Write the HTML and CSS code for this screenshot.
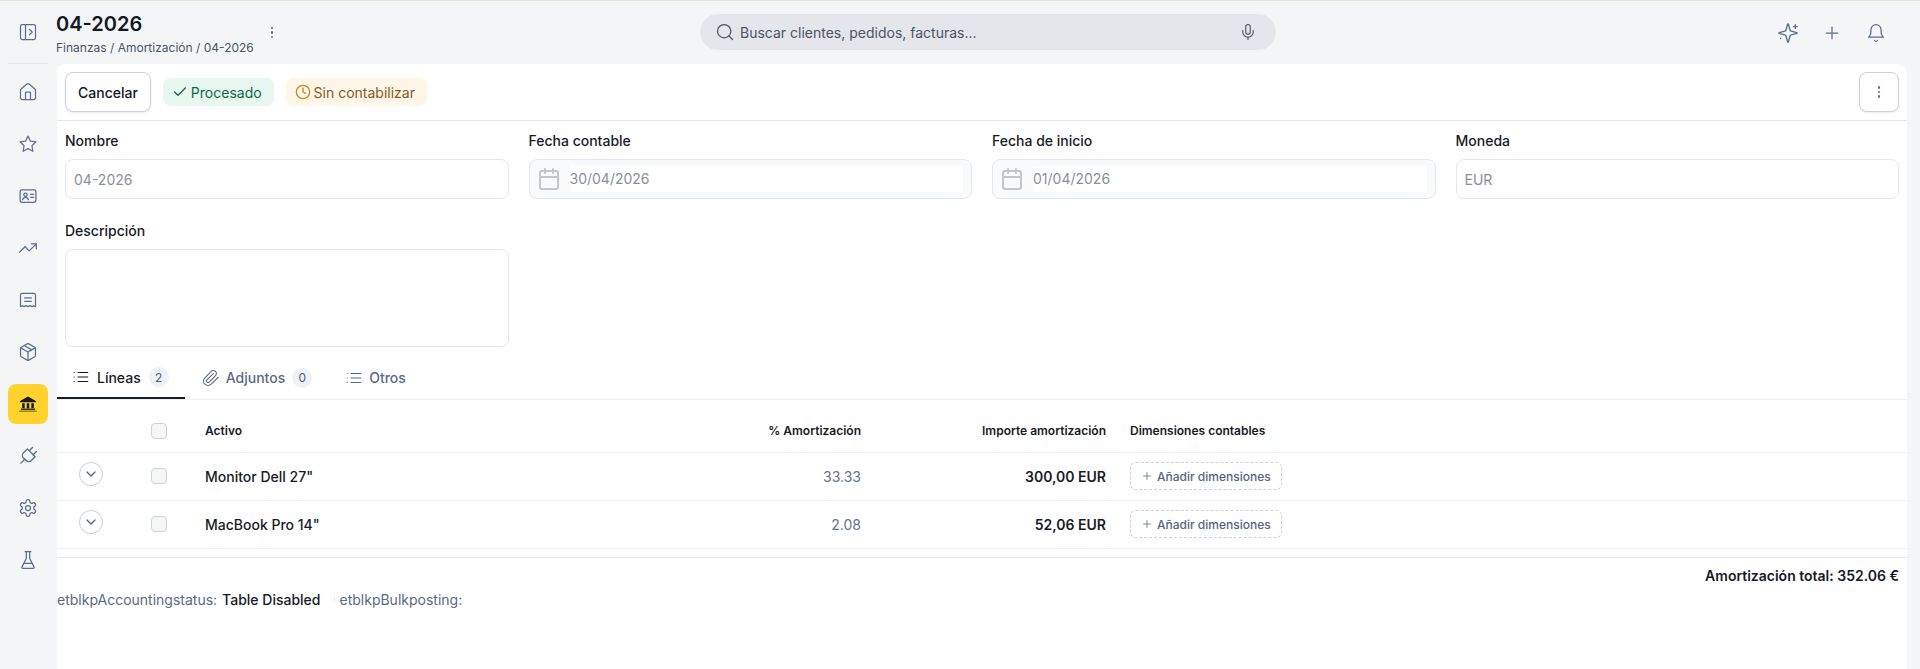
FILE: index.html
```html
<!DOCTYPE html>
<html lang="es">
<head>
    <meta charset="UTF-8">
    <title>04-2026 - Amortización</title>
    <meta name="viewport" content="width=device-width,initial-scale=1">
    <link rel="stylesheet" href="styles.css">
</head>
<body>
    <header class="topbar">
        <div class="rail-top">
            <button class="rail-btn">
                <svg class="icon" viewBox="0 0 24 24"><rect x="3" y="3" width="18" height="18" rx="2"/><path d="M9 3v18"/><path d="m14 9 3 3-3 3"/></svg>
            </button>
        </div>
        <div class="topbar-main">
            <div class="page-head">
                <div class="page-titles">
                    <h1>04-2026</h1>
                    <div class="breadcrumb">Finanzas / Amortización / 04-2026</div>
                </div>
                <div class="head-dots"><i></i><i></i><i></i></div>
            </div>
            <div class="global-search">
                <svg class="icon search-icon" viewBox="0 0 24 24"><circle cx="11" cy="11" r="8"/><path d="m21 21-4.3-4.3"/></svg>
                <span class="search-text">Buscar clientes, pedidos, facturas...</span>
                <svg class="icon mic-icon" viewBox="0 0 24 24"><path d="M12 2a3 3 0 0 0-3 3v7a3 3 0 0 0 6 0V5a3 3 0 0 0-3-3Z"/><path d="M19 10v2a7 7 0 0 1-14 0v-2"/><path d="M12 19v3"/></svg>
            </div>
            <div class="top-actions">
                <button class="rail-btn"><svg class="icon icon-lg" viewBox="0 0 24 24"><path d="M9.937 15.5A2 2 0 0 0 8.5 14.063l-6.135-1.582a.5.5 0 0 1 0-.962L8.5 9.936A2 2 0 0 0 9.937 8.5l1.582-6.135a.5.5 0 0 1 .963 0L14.063 8.5A2 2 0 0 0 15.5 9.937l6.135 1.581a.5.5 0 0 1 0 .964L15.5 14.063a2 2 0 0 0-1.437 1.437l-1.582 6.135a.5.5 0 0 1-.963 0z"/><path d="M20 3v4"/><path d="M22 5h-4"/><path d="M4 18v.01"/></svg></button>
                <button class="rail-btn"><svg class="icon" viewBox="0 0 24 24"><path d="M5 12h14"/><path d="M12 5v14"/></svg></button>
                <button class="rail-btn"><svg class="icon" viewBox="0 0 24 24"><path d="M6 8a6 6 0 0 1 12 0c0 7 3 9 3 9H3s3-2 3-9"/><path d="M10.3 21a1.94 1.94 0 0 0 3.4 0"/></svg></button>
            </div>
        </div>
    </header>

    <div class="app-body">
        <nav class="sidebar">
            <a class="side-item"><svg class="icon" viewBox="0 0 24 24"><path d="M15 21v-8a1 1 0 0 0-1-1h-4a1 1 0 0 0-1 1v8"/><path d="M3 10a2 2 0 0 1 .709-1.528l7-5.999a2 2 0 0 1 2.582 0l7 5.999A2 2 0 0 1 21 10v9a2 2 0 0 1-2 2H5a2 2 0 0 1-2-2z"/></svg></a>
            <a class="side-item"><svg class="icon" viewBox="0 0 24 24"><path d="M12 2.5l2.9 6.1 6.6.9-4.8 4.6 1.2 6.6L12 17.5l-5.9 3.2 1.2-6.6L2.5 9.5l6.6-.9z"/></svg></a>
            <a class="side-item"><svg class="icon" viewBox="0 0 24 24"><rect x="2.5" y="4.5" width="19" height="15" rx="2"/><circle cx="9" cy="10.5" r="2"/><path d="M5.5 16.5c.5-2 2-3 3.5-3s3 1 3.5 3"/><path d="M15 10h4"/><path d="M15 13.5h4"/></svg></a>
            <a class="side-item"><svg class="icon" viewBox="0 0 24 24"><path d="m22 7-8.5 8.5-5-5L2 17"/><path d="M16 7h6v6"/></svg></a>
            <a class="side-item"><svg class="icon" viewBox="0 0 24 24"><path d="M3 6a2 2 0 0 1 2-2h14a2 2 0 0 1 2 2v14l-2-1.2-2.2 1.2-2.4-1.2-2.400 1.200-2.400-1.200L7.200 20 5 18.800 3 20z"/><path d="M8 9.500h8"/><path d="M8 13.500h8"/></svg></a>
            <a class="side-item"><svg class="icon" viewBox="0 0 24 24"><path d="M11 21.730a2 2 0 0 0 2 0l7-4A2 2 0 0 0 21 16V8a2 2 0 0 0-1-1.730l-7-4a2 2 0 0 0-2 0l-7 4A2 2 0 0 0 3 8v8a2 2 0 0 0 1 1.730z"/><path d="M12 22V12"/><path d="m3.300 7 8.700 5 8.700-5"/><path d="m7.500 4.270 9 5.150"/></svg></a>
            <a class="side-item active">
                <svg class="icon-bank" viewBox="0 0 24 24"><path d="M12 3 2.500 8.500V10h19V8.500z"/><path d="M5 11h3v6H5zM10.500 11h3v6h-3zM16 11h3v6h-3z"/><path d="M3.500 17.500h17V19h-17z"/><path class="bank-base" d="M1.500 20h21v1.200h-21z"/></svg>
            </a>
            <a class="side-item"><svg class="icon icon-lg" viewBox="0 0 24 24"><g transform="rotate(45 12 12)"><path d="M12 23v-6"/><path d="M9 7V2"/><path d="M15 7V2"/><path d="M18 7v6a4 4 0 0 1-4 4h-4a4 4 0 0 1-4-4V7Z"/></g></svg></a>
            <a class="side-item"><svg class="icon" viewBox="0 0 24 24"><path d="M12.220 2h-.44a2 2 0 0 0-2 2v.18a2 2 0 0 1-1 1.730l-.43.25a2 2 0 0 1-2 0l-.15-.08a2 2 0 0 0-2.730.73l-.22.38a2 2 0 0 0 .73 2.730l.15.1a2 2 0 0 1 1 1.720v.51a2 2 0 0 1-1 1.740l-.15.09a2 2 0 0 0-.73 2.730l.22.38a2 2 0 0 0 2.730.73l.15-.08a2 2 0 0 1 2 0l.43.25a2 2 0 0 1 1 1.730V20a2 2 0 0 0 2 2h.44a2 2 0 0 0 2-2v-.18a2 2 0 0 1 1-1.730l.43-.25a2 2 0 0 1 2 0l.15.08a2 2 0 0 0 2.730-.73l.22-.39a2 2 0 0 0-.73-2.730l-.15-.08a2 2 0 0 1-1-1.740v-.5a2 2 0 0 1 1-1.740l.15-.09a2 2 0 0 0 .73-2.730l-.22-.38a2 2 0 0 0-2.730-.73l-.15.08a2 2 0 0 1-2 0l-.43-.25a2 2 0 0 1-1-1.730V4a2 2 0 0 0-2-2z"/><circle cx="12" cy="12" r="3"/></svg></a>
            <a class="side-item"><svg class="icon" viewBox="0 0 24 24"><path d="M10 2v7.527a2 2 0 0 1-.211.896L4.720 20.550a1 1 0 0 0 .9 1.450h12.760a1 1 0 0 0 .9-1.450l-5.069-10.127A2 2 0 0 1 14 9.527V2"/><path d="M8.500 2h7"/><path d="M7 16h10"/></svg></a>
        </nav>

        <main class="card">
            <div class="toolbar">
                <button class="btn">Cancelar</button>
                <span class="status status-ok">
                    <svg class="status-icon" viewBox="0 0 24 24"><path d="M20 6 9 17l-5-5"/></svg>
                    Procesado
                </span>
                <span class="status status-warn">
                    <svg class="status-icon" viewBox="0 0 24 24"><circle cx="12" cy="12" r="10"/><path d="M12 6v6l4 2"/></svg>
                    Sin contabilizar
                </span>
                <button class="btn btn-more"><span class="more-dots"><i></i><i></i><i></i></span></button>
            </div>

            <div class="form-grid">
                <div class="field">
                    <label>Nombre</label>
                    <div class="input">04-2026</div>
                </div>
                <div class="field">
                    <label>Fecha contable</label>
                    <div class="input input-date">
                        <svg class="date-icon" viewBox="0 0 24 24"><path d="M8 2v4"/><path d="M16 2v4"/><rect x="3" y="4" width="18" height="18" rx="2"/><path d="M3 10h18"/></svg>
                        <span class="date-value">30/04/2026</span>
                    </div>
                </div>
                <div class="field">
                    <label>Fecha de inicio</label>
                    <div class="input input-date">
                        <svg class="date-icon" viewBox="0 0 24 24"><path d="M8 2v4"/><path d="M16 2v4"/><rect x="3" y="4" width="18" height="18" rx="2"/><path d="M3 10h18"/></svg>
                        <span class="date-value">01/04/2026</span>
                    </div>
                </div>
                <div class="field">
                    <label>Moneda</label>
                    <div class="input">EUR</div>
                </div>
                <div class="field">
                    <label>Descripción</label>
                    <div class="textarea"></div>
                </div>
            </div>

            <div class="tabs">
                <a class="tab active">
                    <svg class="tab-icon" viewBox="0 0 24 24"><path d="M3 6h.01"/><path d="M3 12h.01"/><path d="M3 18h.01"/><path d="M8 6h13"/><path d="M8 12h13"/><path d="M8 18h13"/></svg>
                    Líneas <span class="tab-count">2</span>
                </a>
                <a class="tab">
                    <svg class="tab-icon" viewBox="0 0 24 24"><path d="m21.440 11.050-9.190 9.190a6 6 0 0 1-8.490-8.490l8.570-8.570A4 4 0 1 1 18 8.840l-8.590 8.570a2 2 0 0 1-2.830-2.830l8.490-8.480"/></svg>
                    Adjuntos <span class="tab-count">0</span>
                </a>
                <a class="tab">
                    <svg class="tab-icon" viewBox="0 0 24 24"><path d="M3 6h.01"/><path d="M3 12h.01"/><path d="M3 18h.01"/><path d="M8 6h13"/><path d="M8 12h13"/><path d="M8 18h13"/></svg>
                    Otros
                </a>
            </div>

            <table class="lines">
                <colgroup>
                    <col class="col-expand">
                    <col class="col-check">
                    <col>
                    <col class="col-pct">
                    <col class="col-amount">
                    <col class="col-dims">
                </colgroup>
                <thead>
                    <tr>
                        <th></th>
                        <th><span class="checkbox"></span></th>
                        <th class="col-name">Activo</th>
                        <th class="num">% Amortización</th>
                        <th class="num">Importe amortización</th>
                        <th>Dimensiones contables</th>
                    </tr>
                </thead>
                <tbody>
                    <tr>
                        <td><span class="expand-btn"><svg viewBox="0 0 24 24"><path d="m6 9 6 6 6-6"/></svg></span></td>
                        <td><span class="checkbox"></span></td>
                        <td class="col-name">Monitor Dell 27"</td>
                        <td class="num pct">33.33</td>
                        <td class="num amount">300,00 EUR</td>
                        <td><span class="dims-btn"><svg viewBox="0 0 24 24"><path d="M5 12h14"/><path d="M12 5v14"/></svg>Añadir dimensiones</span></td>
                    </tr>
                    <tr>
                        <td><span class="expand-btn"><svg viewBox="0 0 24 24"><path d="m6 9 6 6 6-6"/></svg></span></td>
                        <td><span class="checkbox"></span></td>
                        <td class="col-name">MacBook Pro 14"</td>
                        <td class="num pct">2.08</td>
                        <td class="num amount">52,06 EUR</td>
                        <td><span class="dims-btn"><svg viewBox="0 0 24 24"><path d="M5 12h14"/><path d="M12 5v14"/></svg>Añadir dimensiones</span></td>
                    </tr>
                </tbody>
            </table>

            <div class="total-row">Amortización total: 352.06 €</div>

            <div class="meta-row">
                <span class="meta-key">etblkpAccountingstatus:</span>
                <span class="meta-value">Table Disabled</span>
                <span class="meta-sep"></span>
                <span class="meta-key">etblkpBulkposting:</span>
            </div>
        </main>
    </div>
</body>
</html>
```

FILE: styles.css
```css
* {
    margin: 0;
    padding: 0;
    box-sizing: border-box;
}

html, body {
    height: 100%;
    overflow: hidden;
}

body {
    display: flex;
    flex-direction: column;
    font-family: Inter, 'Noto Sans', sans-serif;
    font-size: 14px;
    color: #171b26;
    background: #f4f5f7;
}

button {
    font-family: inherit;
    background: none;
    border: none;
}

.icon {
    width: 20px;
    height: 20px;
    fill: none;
    stroke: #5f6f88;
    stroke-width: 1.5;
    stroke-linecap: round;
    stroke-linejoin: round;
}

.icon-lg {
    width: 22px;
    height: 22px;
}

/* Top bar */
.topbar {
    display: flex;
    height: 64px;
    flex: none;
    border-top: 1px solid #dfe5d6;
}

.rail-top {
    width: 56px;
    flex: none;
    padding: 11px 8px 0;
}

.rail-btn {
    display: flex;
    align-items: center;
    justify-content: center;
    width: 40px;
    height: 40px;
}

.topbar-main {
    flex: 1;
    display: flex;
    align-items: center;
}

.page-head {
    flex: 1;
    display: flex;
    align-items: center;
    gap: 17px;
}

.page-titles {
    margin-top: 1px;
}

.page-titles h1 {
    font-size: 20px;
    line-height: 28px;
    font-weight: 600;
    color: #14181f;
}

.breadcrumb {
    font-size: 12px;
    line-height: 16px;
    color: #4b5563;
    margin-top: 2px;
}

.head-dots, .more-dots {
    display: flex;
    flex-direction: column;
    gap: 2px;
}

.head-dots i, .more-dots i {
    display: block;
    width: 2.5px;
    height: 2.5px;
    border-radius: 50%;
    background: #5f6f88;
}

.global-search {
    width: 576px;
    height: 36px;
    flex: none;
    display: flex;
    align-items: center;
    gap: 5px;
    padding: 0 19px 0 15px;
    border-radius: 18px;
    background: #e4e6eb;
    margin-bottom: 1px;
}

.search-icon {
    stroke: #4b5563;
}

.search-text {
    flex: 1;
    font-size: 14px;
    color: #4b5563;
}

.mic-icon {
    width: 18px;
    height: 18px;
    stroke: #4b5563;
}

.top-actions {
    flex: 1;
    display: flex;
    justify-content: flex-end;
    gap: 4px;
}

.top-actions .rail-btn:last-child {
    margin-right: 24px;
}

/* Sidebar */
.app-body {
    flex: 1;
    display: flex;
    min-height: 0;
    padding-right: 13px;
}

.sidebar {
    width: 57px;
    flex: none;
    display: flex;
    flex-direction: column;
    gap: 12px;
    padding: 8px 8px 0;
    position: relative;
}

.sidebar::before {
    content: "";
    position: absolute;
    top: -1px;
    left: 8px;
    width: 40px;
    height: 1px;
    background: #e3e5ea;
}

.side-item {
    width: 40px;
    height: 40px;
    display: flex;
    align-items: center;
    justify-content: center;
    border-radius: 8px;
}

.side-item.active {
    background: #ffd22e;
}

.icon-bank {
    width: 20px;
    height: 20px;
    fill: #14181f;
}

.bank-base {
    fill: #6b5a1c;
}

/* Main card */
.card {
    flex: 1;
    min-width: 0;
    background: #fff;
    border-radius: 8px 10px 0 0;
}

.toolbar {
    display: flex;
    align-items: center;
    gap: 12px;
    height: 57px;
    padding: 0 8px;
    border-bottom: 1px solid #e4e6ea;
}

.btn {
    height: 40px;
    padding: 0 12px;
    font-size: 14px;
    font-weight: 500;
    color: #14181f;
    background: #fff;
    border: 1px solid #ccd0da;
    border-radius: 8px;
    box-shadow: 0 1px 2px rgba(20, 24, 40, 0.08);
}

.btn-more {
    width: 40px;
    margin-left: auto;
    display: flex;
    align-items: center;
    justify-content: center;
    padding: 0;
}

.status {
    display: inline-flex;
    align-items: center;
    gap: 3px;
    height: 28px;
    padding: 0 12px 0 9px;
    border-radius: 8px;
}

.status-icon {
    width: 16px;
    height: 16px;
    fill: none;
    stroke: currentColor;
    stroke-width: 2;
    stroke-linecap: round;
    stroke-linejoin: round;
}

.status-ok {
    background: #e8f7f0;
    color: #0d6a46;
}

.status-warn {
    background: #fef6e7;
    color: #8a5a1e;
}

.status-warn .status-icon {
    stroke: #cc8529;
}

/* Form */
.form-grid {
    display: grid;
    grid-template-columns: repeat(4, 1fr);
    column-gap: 20px;
    row-gap: 22px;
    padding: 10px 8px 0;
}

.field label {
    display: block;
    font-size: 14px;
    font-weight: 500;
    line-height: 20px;
    margin-bottom: 8px;
    color: #171b26;
}

.input {
    display: flex;
    align-items: center;
    height: 40px;
    padding: 0 8px;
    font-size: 14px;
    color: #8b8f99;
    border: 1px solid #e5e7eb;
    border-radius: 8px;
}

.input-date {
    gap: 9px;
    padding: 0 8px 0 7px;
    background: #f9fafc;
}

.date-icon {
    width: 24px;
    height: 24px;
    flex: none;
    fill: none;
    stroke: #c3c6d0;
    stroke-width: 2;
    stroke-linecap: round;
    stroke-linejoin: round;
}

.date-value {
    flex: 1;
    height: 26px;
    line-height: 26px;
    background: #fff;
}

.textarea {
    height: 98px;
    border: 1px solid #e5e7eb;
    border-radius: 8px;
}

/* Tabs */
.tabs {
    display: flex;
    height: 41px;
    margin-top: 12px;
    gap: 1px;
    border-bottom: 1px solid #eceef1;
}

.tab {
    display: flex;
    align-items: center;
    gap: 6px;
    height: 41px;
    padding: 0 16px 4px;
    font-weight: 500;
    color: #5a6a82;
}

.tab.active {
    color: #171b26;
    border-bottom: 2px solid #171b26;
    padding: 0 16px 2px 15px;
    gap: 7px;
    height: 40px;
}

.tab-icon {
    width: 18px;
    height: 18px;
    fill: none;
    stroke: #5a6a82;
    stroke-width: 1.5;
    stroke-linecap: round;
    stroke-linejoin: round;
}

.tab.active .tab-icon {
    stroke: #171b26;
}

.tab-count {
    display: flex;
    align-items: center;
    justify-content: center;
    width: 20px;
    height: 20px;
    margin-left: 1px;
    border-radius: 50%;
    font-size: 12px;
    font-weight: 400;
    color: #4f5f78;
    background: #eef2f6;
}

/* Table */
.lines {
    width: 100%;
    table-layout: fixed;
    border-collapse: collapse;
}

.col-expand { width: 80px; }
.col-check { width: 44px; }
.col-pct { width: 273px; }
.col-amount { width: 245px; }
.col-dims { width: 789px; }

th, td {
    padding: 0 12px;
    text-align: left;
    border-bottom: 1px solid #f0f1f4;
}

thead tr {
    height: 52px;
}

tbody tr {
    height: 48px;
}

th {
    font-size: 12px;
    font-weight: 600;
    color: #171b26;
    padding-top: 10px;
}

td {
    font-weight: 500;
}

th:first-child, td:first-child {
    padding: 0 0 0 22px;
}

th:nth-child(2), td:nth-child(2) {
    padding: 0 14px;
}

th:nth-child(2) {
    padding-top: 10px;
}

.col-name {
    padding-left: 24px;
}

.num {
    text-align: right;
}

.pct {
    font-weight: 400;
    color: #64748b;
}

.amount {
    font-weight: 600;
}

.checkbox {
    display: block;
    width: 16px;
    height: 16px;
    border: 1px solid #cfd3dc;
    border-radius: 4px;
    background: #f4f6f8;
}

.expand-btn {
    display: flex;
    align-items: center;
    justify-content: center;
    width: 24px;
    height: 24px;
    margin-bottom: 4px;
    border: 1px solid #c9cdd9;
    border-radius: 50%;
}

.expand-btn svg {
    width: 16px;
    height: 16px;
    fill: none;
    stroke: #55657f;
    stroke-width: 2;
    stroke-linecap: round;
    stroke-linejoin: round;
}

.dims-btn {
    display: inline-flex;
    align-items: center;
    gap: 4px;
    height: 28px;
    padding: 0 10px;
    font-size: 12px;
    color: #55657f;
    border: 1px dashed #cdd1da;
    border-radius: 6px;
    vertical-align: middle;
}

.dims-btn svg {
    width: 12px;
    height: 12px;
    fill: none;
    stroke: #55657f;
    stroke-width: 1.5;
    stroke-linecap: round;
}

/* Footer rows */
.total-row {
    margin-top: 8px;
    padding: 8px 8px 0;
    height: 33px;
    line-height: 20px;
    text-align: right;
    font-weight: 600;
    border-top: 1px solid #e9eaee;
}

.meta-row {
    display: flex;
    align-items: center;
    line-height: 20px;
}

.meta-key {
    color: #5a6a82;
}

.meta-value {
    margin-left: 5px;
    font-weight: 500;
}

.meta-sep {
    width: 1px;
    height: 3px;
    margin: 0 5px 0 13px;
    background: #dfe2e7;
}
```
